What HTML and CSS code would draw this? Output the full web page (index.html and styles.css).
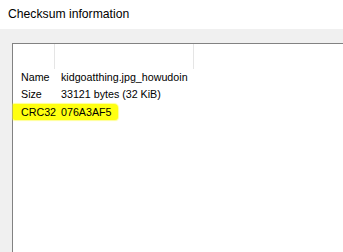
FILE: index.html
```html
<!DOCTYPE html>
<html lang="en">
  <head>
    <meta charset="UTF-8" />
    <meta name="viewport" content="width=device-width, initial-scale=1.0" />
    <title>Checksum information</title>
    <link rel="stylesheet" href="styles.css">
  </head>
  <body>
    <div class="title-bar">Checksum information</div>

    <div class="panel">
      <div class="list-view">
        <div class="list-header">
          <div class="col-name"></div>
          <div class="col-value"></div>
          <div class="col-rest"></div>
        </div>

        <div class="list-row">
          <span class="col-name">Name</span>
          <span class="col-value">kidgoatthing.jpg_howudoin</span>
        </div>
        <div class="list-row">
          <span class="col-name">Size</span>
          <span class="col-value">33121 bytes (32 KiB)</span>
        </div>
        <div class="list-row">
          <!-- highlighter mark over the checksum -->
          <span class="marked">
            <span class="col-name">CRC32</span>
            <span class="col-value short">076A3AF5</span>
          </span>
        </div>
      </div>
    </div>
  </body>
</html>
```

FILE: styles.css
```css
body {
  font-family: "Liberation Sans", Arial, sans-serif;
  margin: 0;
  padding: 0;
  width: 343px;
  height: 252px;
  overflow: hidden;
  background-color: #f0f0f0;
  color: #000;
}

.title-bar {
  height: 29px;
  padding-left: 8px;
  background-color: #fff;
  font-size: 12.2px;
  line-height: 29px;
  color: #000;
}

.panel {
  padding: 14px 0 0 12px;
  height: 209px;
}

.list-view {
  height: 100%;
  background-color: #fff;
  border-top: 1px solid #828282;
  border-left: 1px solid #828282;
  font-size: 10.7px;
}

.list-header {
  display: flex;
  height: 25px;
}

.list-header .col-name,
.list-header .col-value {
  border-right: 1px solid #e5e5e5;
}

.col-name {
  width: 42px;
  padding-left: 8px;
  box-sizing: border-box;
  flex-shrink: 0;
}

.col-value {
  width: 139px;
  padding-left: 6px;
  box-sizing: border-box;
  flex-shrink: 0;
  white-space: nowrap;
}

.col-value.short {
  width: auto;
  padding-right: 6px;
}

.list-row {
  display: flex;
  align-items: center;
  height: 17px;
  line-height: 17px;
}

.marked {
  display: flex;
  width: 105px;
  height: 16px;
  line-height: 16px;
  margin-top: 1px;
  background-color: #ffff10;
  border-radius: 1px 4px 3px 2px;
  box-shadow: 0 0 1px 1px rgba(255, 255, 40, 0.5);
}
```
